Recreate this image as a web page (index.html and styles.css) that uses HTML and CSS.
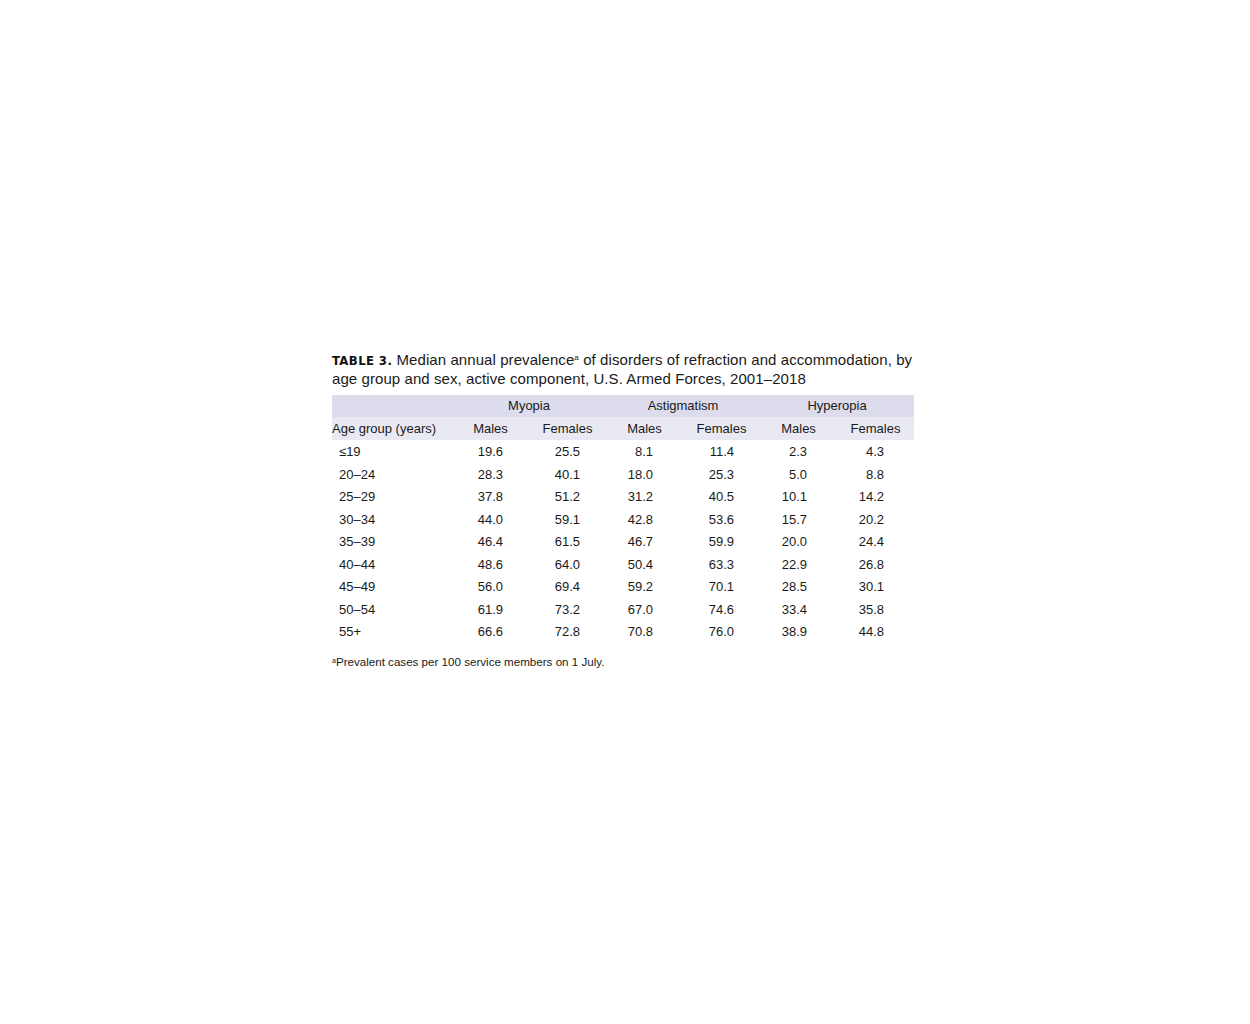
FILE: index.html
```html
<!DOCTYPE html>
<html>
<head>
<meta charset="utf-8">
<link rel="stylesheet" href="styles.css">
</head>
<body>
<div class="page">
  <div class="figure">
    <p class="caption"><span class="label">TABLE 3.</span> Median annual prevalence<sup class="sup">a</sup> of disorders of refraction and accommodation, by age group and sex, active component, U.S. Armed Forces, 2001–2018</p>
    <table class="data">
      <colgroup>
        <col class="c-age">
        <col class="c-num"><col class="c-num"><col class="c-num"><col class="c-num"><col class="c-num"><col class="c-num">
      </colgroup>
      <thead>
        <tr class="band1">
          <th></th>
          <th colspan="2">Myopia</th>
          <th colspan="2">Astigmatism</th>
          <th colspan="2">Hyperopia</th>
        </tr>
        <tr class="band2">
          <th class="age-h">Age group (years)</th>
          <th>Males</th><th>Females</th>
          <th>Males</th><th>Females</th>
          <th>Males</th><th>Females</th>
        </tr>
      </thead>
      <tbody>
        <tr><td class="age">≤19</td><td class="p26">19.6</td><td class="p26">25.5</td><td class="p30">8.1</td><td class="p26">11.4</td><td class="p30">2.3</td><td class="p30">4.3</td></tr>
        <tr><td class="age">20–24</td><td class="p26">28.3</td><td class="p26">40.1</td><td class="p30">18.0</td><td class="p26">25.3</td><td class="p30">5.0</td><td class="p30">8.8</td></tr>
        <tr><td class="age">25–29</td><td class="p26">37.8</td><td class="p26">51.2</td><td class="p30">31.2</td><td class="p26">40.5</td><td class="p30">10.1</td><td class="p30">14.2</td></tr>
        <tr><td class="age">30–34</td><td class="p26">44.0</td><td class="p26">59.1</td><td class="p30">42.8</td><td class="p26">53.6</td><td class="p30">15.7</td><td class="p30">20.2</td></tr>
        <tr><td class="age">35–39</td><td class="p26">46.4</td><td class="p26">61.5</td><td class="p30">46.7</td><td class="p26">59.9</td><td class="p30">20.0</td><td class="p30">24.4</td></tr>
        <tr><td class="age">40–44</td><td class="p26">48.6</td><td class="p26">64.0</td><td class="p30">50.4</td><td class="p26">63.3</td><td class="p30">22.9</td><td class="p30">26.8</td></tr>
        <tr><td class="age">45–49</td><td class="p26">56.0</td><td class="p26">69.4</td><td class="p30">59.2</td><td class="p26">70.1</td><td class="p30">28.5</td><td class="p30">30.1</td></tr>
        <tr><td class="age">50–54</td><td class="p26">61.9</td><td class="p26">73.2</td><td class="p30">67.0</td><td class="p26">74.6</td><td class="p30">33.4</td><td class="p30">35.8</td></tr>
        <tr><td class="age">55+</td><td class="p26">66.6</td><td class="p26">72.8</td><td class="p30">70.8</td><td class="p26">76.0</td><td class="p30">38.9</td><td class="p30">44.8</td></tr>
      </tbody>
    </table>
    <p class="note"><sup class="fn">a</sup>Prevalent cases per 100 service members on 1 July.</p>
  </div>
</div>
</body>
</html>
```

FILE: styles.css
```css
html, body {
  margin: 0;
  padding: 0;
  background: #ffffff;
}

body {
  font-family: "Liberation Sans", Arial, sans-serif;
  color: #1a1a1a;
}

.page {
  padding: 351px 0 0 332px;
}

.figure {
  width: 582px;
}

.caption {
  margin: 0;
  width: 592px;
  font-size: 15px;
  line-height: 18px;
  letter-spacing: 0.08px;
  color: #1a1a1a;
}

.label {
  font-family: "DejaVu Sans Condensed", "DejaVu Sans", sans-serif;
  font-weight: bold;
  font-size: 13px;
  letter-spacing: 0.4px;
  color: #111111;
}

.sup {
  font-size: 8px;
  vertical-align: 5px;
  line-height: 0;
}

.data {
  margin-top: 7px;
  width: 582px;
  border-collapse: collapse;
  table-layout: fixed;
  font-size: 13px;
}

.c-age { width: 120px; }
.c-num { width: 77px; }

.data th {
  font-weight: normal;
  text-align: center;
  padding: 0;
  line-height: 22px;
  white-space: nowrap;
}

.band1 th {
  background: #dcdcec;
  height: 22px;
}

.band2 th {
  background: #e9e9f3;
  height: 23px;
}

.data th.age-h {
  text-align: left;
}

.data tbody tr:first-child td {
  padding-top: 1px;
}

.data td {
  padding: 0;
  height: 22.5px;
  line-height: 22.5px;
  text-align: right;
  white-space: nowrap;
}

.data td.age {
  text-align: left;
  padding-left: 7px;
}

.data td.p26 { padding-right: 26px; }
.data td.p30 { padding-right: 30px; }

.note {
  margin: 11px 0 0 0;
  font-size: 11.6px;
  line-height: 14px;
}

.fn {
  font-size: 7px;
  vertical-align: 3px;
  line-height: 0;
}
```
